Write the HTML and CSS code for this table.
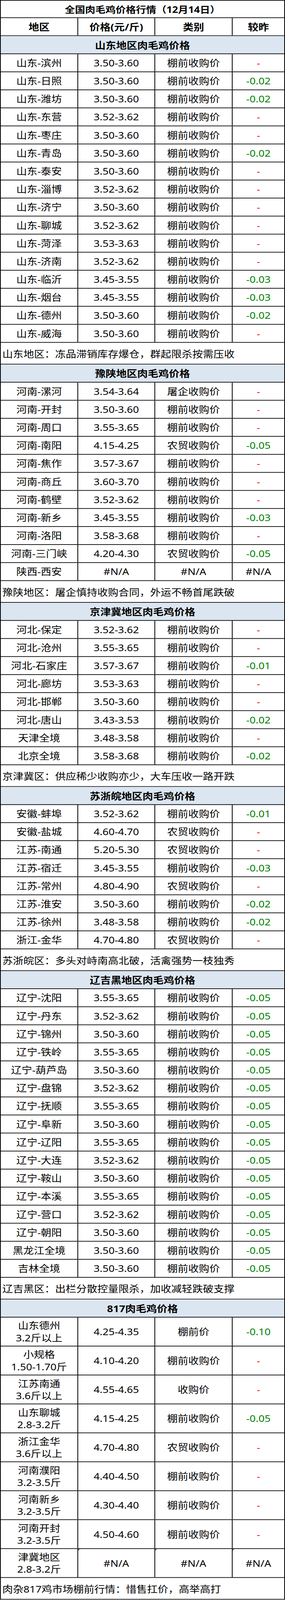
FILE: index.html
```html
<!DOCTYPE html>
<html lang="zh-CN">
<head>
<meta charset="utf-8">
<title>全国肉毛鸡价格行情</title>
<link rel="stylesheet" href="styles.css">
</head>
<body>
<div class="sheet">
  <div class="wide title b">全国肉毛鸡价格行情（12月14日）</div>
  <div class="row b"><div>地区</div><div>价格(元/斤)</div><div>类别</div><div>较昨</div></div>

  <div class="wide sec b">山东地区肉毛鸡价格</div>
  <div class="row"><div>山东-滨州</div><div>3.50-3.60</div><div>棚前收购价</div><div class="eq">-</div></div>
  <div class="row"><div>山东-日照</div><div>3.50-3.60</div><div>棚前收购价</div><div class="dn">-0.02</div></div>
  <div class="row"><div>山东-潍坊</div><div>3.50-3.60</div><div>棚前收购价</div><div class="dn">-0.02</div></div>
  <div class="row"><div>山东-东营</div><div>3.52-3.62</div><div>棚前收购价</div><div class="eq">-</div></div>
  <div class="row"><div>山东-枣庄</div><div>3.50-3.60</div><div>棚前收购价</div><div class="eq">-</div></div>
  <div class="row"><div>山东-青岛</div><div>3.50-3.60</div><div>棚前收购价</div><div class="dn">-0.02</div></div>
  <div class="row"><div>山东-泰安</div><div>3.50-3.60</div><div>棚前收购价</div><div class="eq">-</div></div>
  <div class="row"><div>山东-淄博</div><div>3.52-3.62</div><div>棚前收购价</div><div class="eq">-</div></div>
  <div class="row"><div>山东-济宁</div><div>3.50-3.60</div><div>棚前收购价</div><div class="eq">-</div></div>
  <div class="row"><div>山东-聊城</div><div>3.52-3.62</div><div>棚前收购价</div><div class="eq">-</div></div>
  <div class="row"><div>山东-菏泽</div><div>3.53-3.63</div><div>棚前收购价</div><div class="eq">-</div></div>
  <div class="row"><div>山东-济南</div><div>3.52-3.62</div><div>棚前收购价</div><div class="eq">-</div></div>
  <div class="row"><div>山东-临沂</div><div>3.45-3.55</div><div>棚前收购价</div><div class="dn">-0.03</div></div>
  <div class="row"><div>山东-烟台</div><div>3.45-3.55</div><div>棚前收购价</div><div class="dn">-0.03</div></div>
  <div class="row"><div>山东-德州</div><div>3.50-3.60</div><div>棚前收购价</div><div class="dn">-0.02</div></div>
  <div class="row"><div>山东-威海</div><div>3.50-3.60</div><div>棚前收购价</div><div class="eq">-</div></div>
  <div class="wide note">山东地区：冻品滞销库存爆仓，群起限杀按需压收</div>

  <div class="wide sec b">豫陕地区肉毛鸡价格</div>
  <div class="row"><div>河南-漯河</div><div>3.54-3.64</div><div>屠企收购价</div><div class="eq">-</div></div>
  <div class="row"><div>河南-开封</div><div>3.50-3.60</div><div>棚前收购价</div><div class="eq">-</div></div>
  <div class="row"><div>河南-周口</div><div>3.55-3.65</div><div>棚前收购价</div><div class="eq">-</div></div>
  <div class="row"><div>河南-南阳</div><div>4.15-4.25</div><div>农贸收购价</div><div class="dn">-0.05</div></div>
  <div class="row"><div>河南-焦作</div><div>3.57-3.67</div><div>棚前收购价</div><div class="eq">-</div></div>
  <div class="row"><div>河南-商丘</div><div>3.60-3.70</div><div>棚前收购价</div><div class="eq">-</div></div>
  <div class="row"><div>河南-鹤壁</div><div>3.52-3.62</div><div>棚前收购价</div><div class="eq">-</div></div>
  <div class="row"><div>河南-新乡</div><div>3.45-3.55</div><div>棚前收购价</div><div class="dn">-0.03</div></div>
  <div class="row"><div>河南-洛阳</div><div>3.58-3.68</div><div>棚前收购价</div><div class="eq">-</div></div>
  <div class="row"><div>河南-三门峡</div><div>4.20-4.30</div><div>农贸收购价</div><div class="dn">-0.05</div></div>
  <div class="row"><div>陕西-西安</div><div>#N/A</div><div>#N/A</div><div>#N/A</div></div>
  <div class="wide note">豫陕地区：屠企慎持收购合同，外运不畅首尾跌破</div>

  <div class="wide sec b">京津冀地区肉毛鸡价格</div>
  <div class="row"><div>河北-保定</div><div>3.52-3.62</div><div>棚前收购价</div><div class="eq">-</div></div>
  <div class="row"><div>河北-沧州</div><div>3.55-3.65</div><div>棚前收购价</div><div class="eq">-</div></div>
  <div class="row"><div>河北-石家庄</div><div>3.57-3.67</div><div>棚前收购价</div><div class="dn">-0.01</div></div>
  <div class="row"><div>河北-廊坊</div><div>3.53-3.63</div><div>棚前收购价</div><div class="eq">-</div></div>
  <div class="row"><div>河北-邯郸</div><div>3.50-3.60</div><div>棚前收购价</div><div class="eq">-</div></div>
  <div class="row"><div>河北-唐山</div><div>3.43-3.53</div><div>棚前收购价</div><div class="dn">-0.02</div></div>
  <div class="row"><div>天津全境</div><div>3.48-3.58</div><div>棚前收购价</div><div class="eq">-</div></div>
  <div class="row"><div>北京全境</div><div>3.58-3.68</div><div>棚前收购价</div><div class="dn">-0.02</div></div>
  <div class="wide note">京津冀区：供应稀少收购亦少，大车压收一路开跌</div>

  <div class="wide sec b">苏浙皖地区肉毛鸡价格</div>
  <div class="row"><div>安徽-蚌埠</div><div>3.52-3.62</div><div>棚前收购价</div><div class="dn">-0.01</div></div>
  <div class="row"><div>安徽-盐城</div><div>4.60-4.70</div><div>农贸收购价</div><div class="eq">-</div></div>
  <div class="row"><div>江苏-南通</div><div>5.20-5.30</div><div>农贸收购价</div><div class="eq">-</div></div>
  <div class="row"><div>江苏-宿迁</div><div>3.45-3.55</div><div>棚前收购价</div><div class="dn">-0.03</div></div>
  <div class="row"><div>江苏-常州</div><div>4.80-4.90</div><div>农贸收购价</div><div class="eq">-</div></div>
  <div class="row"><div>江苏-淮安</div><div>3.50-3.60</div><div>棚前收购价</div><div class="dn">-0.02</div></div>
  <div class="row"><div>江苏-徐州</div><div>3.48-3.58</div><div>棚前收购价</div><div class="dn">-0.02</div></div>
  <div class="row"><div>浙江-金华</div><div>4.70-4.80</div><div>农贸收购价</div><div class="eq">-</div></div>
  <div class="wide note">苏浙皖区：多头对峙南高北破，活禽强势一枝独秀</div>

  <div class="wide sec b">辽吉黑地区肉毛鸡价格</div>
  <div class="row"><div>辽宁-沈阳</div><div>3.55-3.65</div><div>棚前收购价</div><div class="dn">-0.05</div></div>
  <div class="row"><div>辽宁-丹东</div><div>3.52-3.62</div><div>棚前收购价</div><div class="dn">-0.05</div></div>
  <div class="row"><div>辽宁-锦州</div><div>3.50-3.60</div><div>棚前收购价</div><div class="dn">-0.05</div></div>
  <div class="row"><div>辽宁-铁岭</div><div>3.55-3.65</div><div>棚前收购价</div><div class="dn">-0.05</div></div>
  <div class="row"><div>辽宁-葫芦岛</div><div>3.50-3.60</div><div>棚前收购价</div><div class="dn">-0.05</div></div>
  <div class="row"><div>辽宁-盘锦</div><div>3.52-3.62</div><div>棚前收购价</div><div class="dn">-0.05</div></div>
  <div class="row"><div>辽宁-抚顺</div><div>3.55-3.65</div><div>棚前收购价</div><div class="dn">-0.05</div></div>
  <div class="row"><div>辽宁-阜新</div><div>3.50-3.60</div><div>棚前收购价</div><div class="dn">-0.05</div></div>
  <div class="row"><div>辽宁-辽阳</div><div>3.55-3.65</div><div>棚前收购价</div><div class="dn">-0.05</div></div>
  <div class="row"><div>辽宁-大连</div><div>3.52-3.62</div><div>棚前收购价</div><div class="dn">-0.05</div></div>
  <div class="row"><div>辽宁-鞍山</div><div>3.50-3.60</div><div>棚前收购价</div><div class="dn">-0.05</div></div>
  <div class="row"><div>辽宁-本溪</div><div>3.55-3.65</div><div>棚前收购价</div><div class="dn">-0.05</div></div>
  <div class="row"><div>辽宁-营口</div><div>3.52-3.62</div><div>棚前收购价</div><div class="dn">-0.05</div></div>
  <div class="row"><div>辽宁-朝阳</div><div>3.50-3.60</div><div>棚前收购价</div><div class="dn">-0.05</div></div>
  <div class="row"><div>黑龙江全境</div><div>3.50-3.60</div><div>棚前收购价</div><div class="dn">-0.05</div></div>
  <div class="row"><div>吉林全境</div><div>3.50-3.60</div><div>棚前收购价</div><div class="dn">-0.05</div></div>
  <div class="wide note">辽吉黑区：出栏分散控量限杀，加收减轻跌破支撑</div>

  <div class="wide sec b">817肉毛鸡价格</div>
  <div class="row tall"><div>山东德州<br>3.2斤以上</div><div>4.25-4.35</div><div>棚前价</div><div class="dn">-0.10</div></div>
  <div class="row tall"><div>小规格<br>1.50-1.70斤</div><div>4.10-4.20</div><div>棚前收购价</div><div class="eq">-</div></div>
  <div class="row tall"><div>江苏南通<br>3.6斤以上</div><div>4.55-4.65</div><div>收购价</div><div class="eq">-</div></div>
  <div class="row tall"><div>山东聊城<br>2.8-3.2斤</div><div>4.15-4.25</div><div>棚前收购价</div><div class="dn">-0.05</div></div>
  <div class="row tall"><div>浙江金华<br>3.6斤以上</div><div>4.70-4.80</div><div>农贸收购价</div><div class="eq">-</div></div>
  <div class="row tall"><div>河南濮阳<br>3.2-3.5斤</div><div>4.40-4.50</div><div>棚前收购价</div><div class="eq">-</div></div>
  <div class="row tall"><div>河南新乡<br>3.2-3.5斤</div><div>4.30-4.40</div><div>棚前收购价</div><div class="eq">-</div></div>
  <div class="row tall"><div>河南开封<br>3.2-3.5斤</div><div>4.50-4.60</div><div>棚前收购价</div><div class="eq">-</div></div>
  <div class="row tall"><div>津冀地区<br>2.8-3.2斤</div><div class="err">#N/A</div><div class="err">#N/A</div><div class="err">#N/A</div></div>
  <div class="wide note">肉杂817鸡市场棚前行情：惜售扛价，高举高打</div>
</div>
</body>
</html>
```

FILE: styles.css
```css
html, body {
  margin: 0;
  padding: 0;
  background: #ffffff;
}

body {
  font-family: "Noto Sans", "Noto Sans CJK SC", sans-serif;
  font-size: 27px;
  color: #000000;
}

/* the photographed frame holds 4096px of height: the sheet is drawn
   compressed vertically so the whole 4701px-tall table fits in it,
   and its flow footprint is trimmed to the drawn height */
.sheet {
  width: 729px;
  box-sizing: border-box;
  border: 2px solid #000000;
  border-bottom: none;
  transform: scaleY(0.8713);
  transform-origin: 0 0;
  margin-bottom: -605px;
}

.row {
  display: grid;
  grid-template-columns: 196px 197px 198px 134px;
  height: 53px;
  box-sizing: border-box;
  border-bottom: 2px solid #000000;
}

.row > div {
  display: flex;
  align-items: center;
  justify-content: center;
  text-align: center;
  line-height: 36px;
  white-space: nowrap;
}

.row > div + div {
  border-left: 2px solid #000000;
}

.row.tall {
  height: 85px;
}

.wide {
  display: flex;
  align-items: center;
  justify-content: center;
  height: 53px;
  box-sizing: border-box;
  border-bottom: 2px solid #000000;
  white-space: nowrap;
}

.title {
  height: 51px;
  font-size: 26px;
}

.sec {
  background: #dce6f1;
}

.note {
  height: 64px;
  justify-content: flex-start;
  padding-left: 4px;
}

.b {
  font-weight: bold;
}

.dn {
  color: #008000;
}

.eq {
  color: #ff0000;
}

.err {
  position: relative;
}

.err::before {
  content: "";
  position: absolute;
  left: 0;
  top: 0;
  border-top: 5px solid #1f8f1f;
  border-right: 5px solid transparent;
}
```
